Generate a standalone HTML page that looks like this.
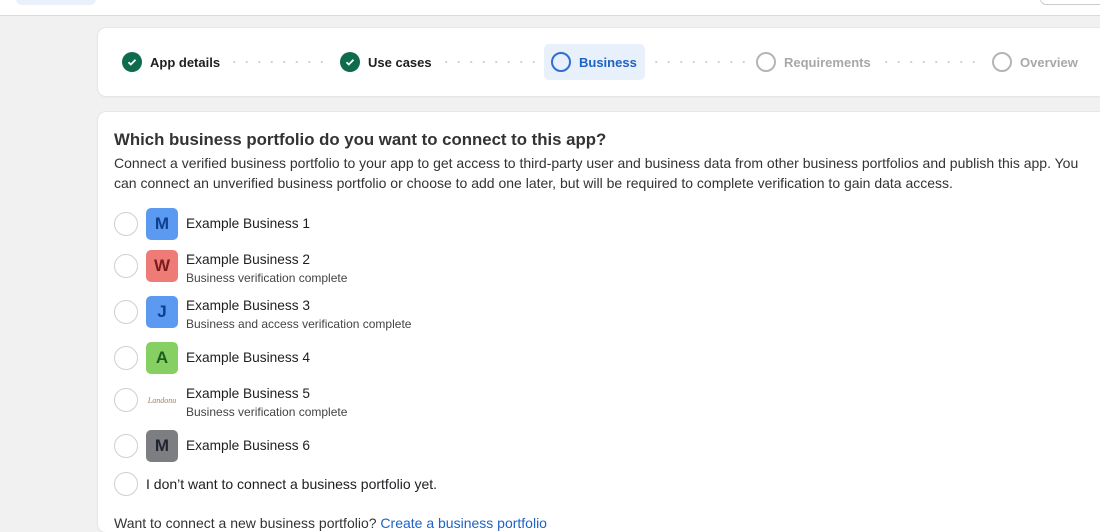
<!DOCTYPE html>
<html><head><meta charset="utf-8"><style>
*{box-sizing:border-box;margin:0;padding:0}
body{width:1100px;height:520px;overflow:hidden;background:#f1f1f1;font-family:"Liberation Sans",sans-serif;color:#1c1e21;position:relative}
.top{position:absolute;left:0;top:0;width:1100px;height:16px;background:#fff;border-bottom:1px solid #dadada}
.top .a{position:absolute;left:16px;top:-8px;width:80px;height:13px;background:#eaf1fb;border-radius:6px}
.top .b{position:absolute;left:1040px;top:-8px;width:70px;height:13px;border:1px solid #ccc;border-radius:6px}
.card{position:absolute;background:#fff;border-radius:8px;box-shadow:0 0 0 1px #e6e6e6,0 1px 2px rgba(0,0,0,.06)}
.st{position:absolute;top:62px;transform:translateY(-50%);display:flex;align-items:center;font-size:13px;font-weight:bold}
.ck{width:20px;height:20px;border-radius:50%;background:#0e6b4d;display:flex;align-items:center;justify-content:center;margin-right:8px}
.ring{width:20px;height:20px;border-radius:50%;border:2px solid #b5b5b5;margin-right:8px}
.dots{position:absolute;top:61px;height:2px;background-image:radial-gradient(circle,#d0d0d0 1px,transparent 1.2px);background-size:12.5px 2px}
.rad{position:absolute;left:114px;width:24px;height:24px;border-radius:50%;border:1px solid #cfcfcf;background:#fff}
.av{position:absolute;left:146px;width:32px;height:32px;border-radius:5px;font-weight:bold;font-size:17px;display:flex;align-items:center;justify-content:center}
.nm{position:absolute;left:186px;font-size:13.7px;color:#1c1e21}
.sub{position:absolute;left:186px;font-size:12px;color:#444}
</style></head><body>
<div class="top"><div class="a"></div><div class="b"></div></div>
<div class="card" style="left:98px;top:28px;width:1010px;height:68px"></div>
<div class="st" style="left:122px"><div class="ck"><svg width="12" height="12" viewBox="0 0 12 12"><path d="M2.5 6.2l2.3 2.3 4.7-4.8" stroke="#fff" stroke-width="1.8" fill="none"/></svg></div>App details</div>
<div class="dots" style="left:228px;width:104px"></div>
<div class="st" style="left:340px"><div class="ck"><svg width="12" height="12" viewBox="0 0 12 12"><path d="M2.5 6.2l2.3 2.3 4.7-4.8" stroke="#fff" stroke-width="1.8" fill="none"/></svg></div>Use cases</div>
<div class="dots" style="left:440px;width:100px"></div>
<div style="position:absolute;left:544px;top:44px;width:101px;height:36px;background:#e7f0fb;border-radius:5px"></div>
<div class="st" style="left:551px;color:#1e62c4"><div class="ring" style="border-color:#2e6fd1"></div>Business</div>
<div class="dots" style="left:650px;width:100px"></div>
<div class="st" style="left:756px;color:#a8a8a8"><div class="ring"></div>Requirements</div>
<div class="dots" style="left:880px;width:105px"></div>
<div class="st" style="left:992px;color:#a8a8a8"><div class="ring"></div>Overview</div>

<div class="card" style="left:98px;top:112px;width:1010px;height:420px"></div>
<div style="position:absolute;left:114px;top:130px;font-size:16.8px;font-weight:bold;color:#333">Which business portfolio do you want to connect to this app?</div>
<div style="position:absolute;left:114px;top:153px;width:980px;font-size:14px;line-height:20px;color:#333">Connect a verified business portfolio to your app to get access to third-party user and business data from other business portfolios and publish this app. You can connect an unverified business portfolio or choose to add one later, but will be required to complete verification to gain data access.</div>

<div class="rad" style="top:212px"></div><div class="av" style="top:208px;background:#5b9af0;color:#0d3f8f">M</div><div class="nm" style="top:216px">Example Business 1</div>
<div class="rad" style="top:254px"></div><div class="av" style="top:250px;background:#ef7b76;color:#7a1d1d">W</div><div class="nm" style="top:252px">Example Business 2</div><div class="sub" style="top:271px">Business verification complete</div>
<div class="rad" style="top:300px"></div><div class="av" style="top:296px;background:#5b9af0;color:#0d3f8f">J</div><div class="nm" style="top:298px">Example Business 3</div><div class="sub" style="top:317px">Business and access verification complete</div>
<div class="rad" style="top:346px"></div><div class="av" style="top:342px;background:#86d063;color:#1d5e1d">A</div><div class="nm" style="top:350px">Example Business 4</div>
<div class="rad" style="top:388px"></div><div class="av" style="top:384px;font-family:'Liberation Serif',serif;font-style:italic;font-weight:normal;font-size:8px;color:#a08060">Landonu</div><div class="nm" style="top:386px">Example Business 5</div><div class="sub" style="top:405px">Business verification complete</div>
<div class="rad" style="top:434px"></div><div class="av" style="top:430px;background:#7d7e82;color:#1f2430">M</div><div class="nm" style="top:438px">Example Business 6</div>
<div class="rad" style="top:472px"></div><div class="nm" style="left:146px;top:476px;font-size:14px">I don’t want to connect a business portfolio yet.</div>
<div style="position:absolute;left:114px;top:515px;font-size:14px;color:#333">Want to connect a new business portfolio? <span style="color:#1e62c4">Create a business portfolio</span></div>
</body></html>
